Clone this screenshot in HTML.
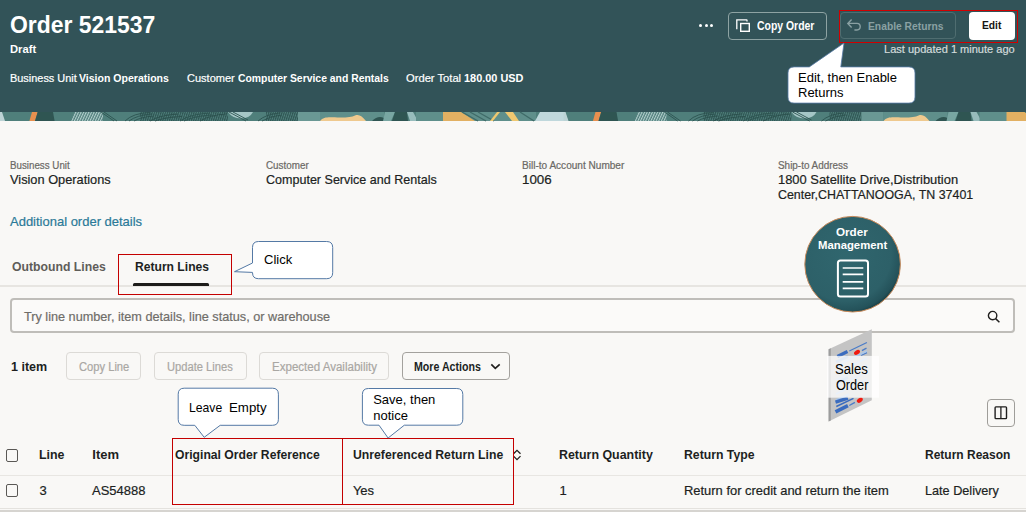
<!DOCTYPE html>
<html><head><meta charset="utf-8"><title>Order 521537</title>
<style>
html,body{margin:0;padding:0;}
body{width:1026px;height:512px;overflow:hidden;position:relative;background:#f9f8f6;font-family:"Liberation Sans",sans-serif;}
.t{position:absolute;white-space:pre;line-height:1;transform-origin:0 0;}
.r{-webkit-text-stroke:0.2px currentColor;}
.a{position:absolute;box-sizing:border-box;}
svg{position:absolute;overflow:visible;}
</style></head><body>
<div class="a" style="left:0;top:0;width:1026px;height:112px;background:#325358"></div>
<svg style="left:0;top:112px" width="1026" height="9" viewBox="0 0 1026 9">
  <defs>
    <pattern id="fp" width="2.2" height="9" patternUnits="userSpaceOnUse" patternTransform="skewX(-18)">
      <rect x="0" y="0" width="1.2" height="9" fill="#2a4f4c" fill-opacity="0.85"/>
    </pattern>
    <pattern id="fpl" width="2.6" height="9" patternUnits="userSpaceOnUse" patternTransform="skewX(-25)">
      <rect x="0" y="0" width="1.2" height="9" fill="#c6dcdc" fill-opacity="0.85"/>
    </pattern>
    <g id="pp">
      <polygon points="0,0 2,0 5,9 0,9" fill="#bcd3d5"/>
      <polygon points="32,0 37.7,0 35,9 29.4,9" fill="#e8904f"/>
      <polygon points="37.7,0 53,0 54.6,9 35,9" fill="#2f5552"/>
      <polygon points="74.6,0 103,0 103,9 71,9" fill="url(#fpl)"/>
      <path d="M101,0 L114,9 M104,0 L117,9" stroke="#2c5350" stroke-width="0.9"/>
      <path d="M125,9 Q133,1 150,0.5 M129,9 Q137,3 152,2 M134,9 Q141,5 154,4" fill="none" stroke="#2c5350" stroke-width="0.9"/>
      <rect x="140" y="0" width="88" height="9" fill="url(#fp)"/>
      <path d="M150,9 Q160,3 178,2 M155,9 Q166,5 182,4.5 M200,9 Q210,3 226,2" fill="none" stroke="#2a4f4c" stroke-width="0.9"/>
      <path d="M180,9 Q190,2 210,1 M184,9 Q194,4 212,3" fill="none" stroke="#2c5350" stroke-width="0.9"/>
      <path d="M228,0 H253 Q250,6 241,6.5 Q232,6 228,0 Z" fill="#a5c6c6"/>
      <path d="M229,0 L246,9 M233,0 L248,8" stroke="#2c5350" stroke-width="0.9"/>
      <path d="M258,9 Q266,2 280,1 M262,9 Q270,4 282,3" fill="none" stroke="#2c5350" stroke-width="0.9"/>
      <rect x="266" y="0" width="32" height="9" fill="url(#fp)"/>
      <rect x="298" y="0" width="22" height="9" fill="#6a9894"/>
      <rect x="320" y="0" width="64" height="9" fill="#5f8f8b"/>
      <path d="M320,9 C324,4 330,5.5 340,5.5 C348,5.5 352,5 355,3.5 C359,2 362,4 366,9 Z" fill="#efc98e"/>
      <path d="M372,9 Q380,1 388,9 Z" fill="#2f5552"/>
      <polygon points="385,0 395,0 391,9 383,9" fill="#78a6a2"/>
      <polygon points="395,0 407,0 408,9 392,9" fill="#2f5552"/>
      <polygon points="407,0 413,0 418,9 410,9" fill="#97bcbc"/>
      <rect x="416" y="0" width="120" height="9" fill="#5f8f8b"/>
      <polygon points="443,0 461,0 475,9 443,9" fill="#e2b062"/>
      <path d="M462,0 L478,9 M470,0 L486,9 M478,0 L494,9 M520,0 L534,9" stroke="#3f6b68" stroke-width="1.4"/>
      <polygon points="497,0 500,0 493,9 490,9" fill="#eec870"/>
      <polygon points="505,0 513,0 519,9 512,9" fill="#f0c870"/>
      <polygon points="540,0 565,0 568,9 535,9" fill="#c0d8dc"/>
    </g>
  </defs>
  <rect x="0" y="0" width="1026" height="9" fill="#4f7f7b"/>
  <use href="#pp" x="0"/>
  <use href="#pp" x="563.5"/>
</svg>
<!-- dots -->
<div class="a" style="left:699.1px;top:23.8px;width:3.2px;height:3.2px;border-radius:50%;background:#fff"></div>
<div class="a" style="left:704.5px;top:23.8px;width:3.2px;height:3.2px;border-radius:50%;background:#fff"></div>
<div class="a" style="left:709.9px;top:23.8px;width:3.2px;height:3.2px;border-radius:50%;background:#fff"></div>
<!-- copy order button -->
<div class="a" style="left:728px;top:11.6px;width:99px;height:28.2px;border:1px solid #8ea3a3;border-radius:4px"></div>
<svg style="left:736px;top:19px" width="14" height="13" viewBox="0 0 14 13">
  <path d="M0.8,10.2 V0.8 H10.6 Q11,0.8 11,1.4 V2.6" fill="none" stroke="#fff" stroke-width="1.3"/>
  <rect x="4.7" y="4.5" width="8.6" height="7.8" fill="none" stroke="#fff" stroke-width="1.4"/>
</svg>
<!-- enable returns button -->
<div class="a" style="left:840.2px;top:12px;width:116.3px;height:27.4px;border:1px solid #4f6d70;border-radius:4px"></div>
<svg style="left:847px;top:20px" width="14" height="11" viewBox="0 0 14 11">
  <path d="M4.6,-0.6 L0.8,3.4 L4.6,7.4 M0.8,3.4 H10 C11.8,3.4 13.2,4.8 13.2,6.6 C13.2,8.5 11.8,10 10,10 H7.4" fill="none" stroke="#8aa1a3" stroke-width="1.4"/>
</svg>
<!-- edit button -->
<div class="a" style="left:969px;top:12px;width:46.2px;height:27.8px;background:#fff;border-radius:4px"></div>
<!-- red rect header -->
<div class="a" style="left:838.9px;top:9.8px;width:179.3px;height:33.3px;border:1.4px solid #d20000"></div>
<!-- callout 1 -->
<svg style="left:0;top:0" width="1026" height="512">
  <path d="M794,66.9 H809.3 L844,43 L840.8,66.9 H909 Q915,66.9 915,72.9 V97.1 Q915,103.1 909,103.1 H794 Q788,103.1 788,97.1 V72.9 Q788,66.9 794,66.9 Z" fill="#fff" stroke="#5479a5" stroke-width="0.8"/>
</svg>
<!-- body details -->
<div class="a" style="left:0;top:284.8px;width:1026px;height:1.8px;background:#e7e5e1"></div>
<div class="a" style="left:132.7px;top:283.2px;width:76.8px;height:2.6px;background:#1d1c1a;border-radius:1.5px 1.5px 0 0"></div>
<div class="a" style="left:118px;top:254.2px;width:114px;height:40.4px;border:1.5px solid #c40000"></div>
<svg style="left:0;top:0" width="1026" height="512">
  <path d="M258.5,241.5 H326.7 Q332.7,241.5 332.7,247.5 V272.7 Q332.7,278.7 326.7,278.7 H258.5 Q252.5,278.7 252.5,272.7 V272.4 L234.5,271.7 L252.5,263 V247.5 Q252.5,241.5 258.5,241.5 Z" fill="#fff" stroke="#5479a5" stroke-width="1"/>
</svg>
<!-- search -->
<div class="a" style="left:10.3px;top:298.2px;width:1004.8px;height:35.2px;border:2px solid #bfbdb9;border-radius:4px;background:#fbfaf9"></div>
<svg style="left:987px;top:310px" width="14" height="13" viewBox="0 0 14 13">
  <circle cx="5.6" cy="5.6" r="4.2" fill="none" stroke="#201f1e" stroke-width="1.4"/>
  <path d="M8.6,8.6 L12.4,12.2" stroke="#201f1e" stroke-width="1.5"/>
</svg>
<!-- buttons -->
<div class="a" style="left:66px;top:352px;width:75.4px;height:27.5px;border:1.2px solid #dcdad6;border-radius:4px"></div>
<div class="a" style="left:154px;top:352px;width:92.7px;height:27.5px;border:1.2px solid #dcdad6;border-radius:4px"></div>
<div class="a" style="left:258.5px;top:352px;width:130.4px;height:27.5px;border:1.2px solid #dcdad6;border-radius:4px"></div>
<div class="a" style="left:401.5px;top:352px;width:108.1px;height:27.5px;border:1.3px solid #a3a19d;border-radius:4px"></div>
<svg style="left:491px;top:363px" width="10" height="7" viewBox="0 0 10 7">
  <path d="M0.3,1.4 L4.3,5.4 L8.7,1.4" fill="none" stroke="#201f1e" stroke-width="1.7"/>
</svg>
<!-- circle -->
<svg style="left:0;top:0" width="1026" height="512">
  <defs>
    <radialGradient id="cg" cx="0.42" cy="0.4" r="0.62">
      <stop offset="0" stop-color="#30666e"/>
      <stop offset="0.78" stop-color="#2d6068"/>
      <stop offset="0.95" stop-color="#24525a"/>
      <stop offset="1" stop-color="#1c4248"/>
    </radialGradient>
  </defs>
  <circle cx="852.6" cy="264.2" r="47.8" fill="url(#cg)" stroke="#c98a5a" stroke-width="1"/>
  <rect x="837.9" y="260.4" width="30.1" height="36.2" rx="2.5" fill="none" stroke="#fff" stroke-width="2"/>
  <path d="M842.7,268 H863.3 M842.7,274.4 H863.3 M842.7,281.9 H863.3 M842.7,288.4 H863.3" stroke="#fff" stroke-width="1.6"/>
</svg>
<!-- sales order doc -->
<svg style="left:0;top:0" width="1026" height="512">
  <polygon points="828.6,349.2 871.8,329.2 871.8,400.3 828.6,421.6" fill="#c4c4c4"/>
  <polygon points="828.6,349.2 830.8,348.2 830.8,420.5 828.6,421.6" fill="#9c9c9c"/>
  <g stroke-linecap="butt" fill="none">
    <path d="M849.3,351 L866.9,342.5 M861.9,350.6 L866.5,348.1 M861,355.5 L867,352.6" stroke="#4a7cc8" stroke-width="1.3"/>
    <path d="M837.4,356.5 L847.5,351.5" stroke="#3a6cbf" stroke-width="3.2"/>
    <path d="M836,366 L867,351 M836,373 L867,358 M836,380 L867,365 M836,387 L867,372 M836,394 L867,379 M836,400 L849,394" stroke="#a9c6ea" stroke-width="1.8"/>
    <path d="M836,362 L848,356.5 M836,383 L848,377.5" stroke="#8fb2e0" stroke-width="3"/>
    <path d="M835.5,402.2 L847.9,398.2" stroke="#3a6cbf" stroke-width="3.4"/>
    <path d="M836.3,406.5 L853.5,398.4" stroke="#3a6cbf" stroke-width="1.5"/>
    <path d="M835.5,411.8 L847.9,405.6" stroke="#3a6cbf" stroke-width="3.6"/>
    <path d="M849.3,405.5 L854.9,402.3" stroke="#4a7cc8" stroke-width="1.4"/>
  </g>
  <ellipse cx="857" cy="352.4" rx="3.3" ry="2.1" transform="rotate(-35 857 352.4)" fill="#f01a10"/>
  <ellipse cx="859.8" cy="400.2" rx="3.3" ry="2.1" transform="rotate(-35 859.8 400.2)" fill="#f01a10"/>
  <rect x="826.9" y="355.9" width="52.1" height="41.8" fill="#ffffff" fill-opacity="0.74"/>
</svg>
<!-- column toggle -->
<div class="a" style="left:987px;top:399.2px;width:27.8px;height:27.8px;border:1.2px solid #9f9d99;border-radius:4px"></div>
<svg style="left:994px;top:406px" width="14" height="14" viewBox="0 0 14 14">
  <rect x="1.1" y="0.9" width="11.4" height="11.7" rx="0.8" fill="none" stroke="#201f1e" stroke-width="1.4"/>
  <path d="M6.9,0.9 V12.6" stroke="#201f1e" stroke-width="1.3"/>
</svg>
<!-- table -->
<div class="a" style="left:5.5px;top:449px;width:12.8px;height:12.9px;border:1.6px solid #5a5855;border-radius:2px"></div>
<div class="a" style="left:5.5px;top:484.2px;width:12.8px;height:12.9px;border:1.6px solid #5a5855;border-radius:2px"></div>
<div class="a" style="left:0;top:474.5px;width:1026px;height:1.6px;background:#e8e6e2"></div>
<div class="a" style="left:0;top:507.6px;width:1026px;height:1.8px;background:#e4e2de"></div>
<div class="a" style="left:0;top:509.6px;width:1026px;height:3px;background:#d6d4d0"></div>
<svg style="left:513px;top:449px" width="9" height="13" viewBox="0 0 9 13">
  <path d="M0.5,4.8 L4,1.3 L7.5,4.8 M0.5,7.1 L4,10.6 L7.5,7.1" fill="none" stroke="#201f1e" stroke-width="1.3"/>
</svg>
<div class="a" style="left:172px;top:438px;width:171px;height:67px;border:1.5px solid #c40000"></div>
<div class="a" style="left:342px;top:438.3px;width:171.8px;height:66.5px;border:1.5px solid #c40000"></div>
<svg style="left:0;top:0" width="1026" height="512">
  <path d="M184.2,388.2 H272.4 Q278.4,388.2 278.4,394.2 V419.3 Q278.4,425.3 272.4,425.3 H220.2 L204.2,437.3 L194.8,425.3 H184.2 Q178.2,425.3 178.2,419.3 V394.2 Q178.2,388.2 184.2,388.2 Z" fill="#fff" stroke="#5479a5" stroke-width="1"/>
  <path d="M368.4,388.5 H456.8 Q462.8,388.5 462.8,394.5 V419.2 Q462.8,425.2 456.8,425.2 H404.3 L388.1,438 L379,425.2 H368.4 Q362.4,425.2 362.4,419.2 V394.5 Q362.4,388.5 368.4,388.5 Z" fill="#fff" stroke="#5479a5" stroke-width="1"/>
</svg>
<div id="t0" class="t" style="left:10.0px;top:14.13px;font-size:23px;font-weight:700;color:#ffffff;transform:scaleX(0.9967);">Order 521537</div>
<div id="t1" class="t" style="left:10.2px;top:43.81px;font-size:10.5px;font-weight:700;color:#ffffff;transform:scaleX(1.0687);">Draft</div>
<div id="t2" class="t r" style="left:10.0px;top:72.67px;font-size:11.5px;font-weight:400;color:#ffffff;transform:scaleX(0.9500);">Business Unit</div>
<div id="t3" class="t" style="left:79.0px;top:72.67px;font-size:11.5px;font-weight:700;color:#ffffff;transform:scaleX(0.9154);">Vision Operations</div>
<div id="t4" class="t r" style="left:186.9px;top:72.67px;font-size:11.5px;font-weight:400;color:#ffffff;transform:scaleX(0.9587);">Customer</div>
<div id="t5" class="t" style="left:237.7px;top:72.67px;font-size:11.5px;font-weight:700;color:#ffffff;transform:scaleX(0.9034);">Computer Service and Rentals</div>
<div id="t6" class="t r" style="left:406.4px;top:72.67px;font-size:11.5px;font-weight:400;color:#ffffff;transform:scaleX(0.9720);">Order Total</div>
<div id="t7" class="t" style="left:464.3px;top:72.67px;font-size:11.5px;font-weight:700;color:#ffffff;transform:scaleX(0.9496);">180.00 USD</div>
<div id="t8" class="t" style="left:756.5px;top:19.74px;font-size:12px;font-weight:700;color:#ffffff;transform:scaleX(0.8695);">Copy Order</div>
<div id="t9" class="t" style="left:868.0px;top:20.57px;font-size:11.5px;font-weight:700;color:#8aa1a3;transform:scaleX(0.8950);">Enable Returns</div>
<div id="t10" class="t" style="left:982.2px;top:20.36px;font-size:10.8px;font-weight:700;color:#161513;transform:scaleX(0.9507);">Edit</div>
<div id="t11" class="t r" style="left:884.4px;top:43.69px;font-size:11px;font-weight:400;color:#d3dbdb;transform:scaleX(1.0033);">Last updated 1 minute ago</div>
<div id="t12" class="t" style="left:798.0px;top:70.60px;font-size:13px;font-weight:400;color:#000;transform:scaleX(0.9997);">Edit, then Enable</div>
<div id="t13" class="t" style="left:798.0px;top:86.30px;font-size:13px;font-weight:400;color:#000;">Returns</div>
<div id="t14" class="t r" style="left:10.2px;top:160.53px;font-size:10px;font-weight:400;color:#6b6965;transform:scaleX(0.9764);">Business Unit</div>
<div id="t15" class="t r" style="left:10.2px;top:172.60px;font-size:13px;font-weight:400;color:#201f1e;transform:scaleX(0.9836);">Vision Operations</div>
<div id="t16" class="t r" style="left:265.8px;top:160.53px;font-size:10px;font-weight:400;color:#6b6965;transform:scaleX(0.9848);">Customer</div>
<div id="t17" class="t r" style="left:265.8px;top:172.60px;font-size:13px;font-weight:400;color:#201f1e;transform:scaleX(0.9642);">Computer Service and Rentals</div>
<div id="t18" class="t r" style="left:522.2px;top:160.53px;font-size:10px;font-weight:400;color:#6b6965;transform:scaleX(1.0057);">Bill-to Account Number</div>
<div id="t19" class="t r" style="left:522.2px;top:172.60px;font-size:13px;font-weight:400;color:#201f1e;transform:scaleX(1.0269);">1006</div>
<div id="t20" class="t r" style="left:778.0px;top:160.53px;font-size:10px;font-weight:400;color:#6b6965;transform:scaleX(0.9914);">Ship-to Address</div>
<div id="t21" class="t r" style="left:778.0px;top:172.90px;font-size:13px;font-weight:400;color:#201f1e;transform:scaleX(0.9930);">1800 Satellite Drive,Distribution</div>
<div id="t22" class="t r" style="left:778.0px;top:188.40px;font-size:13px;font-weight:400;color:#201f1e;transform:scaleX(0.9547);">Center,CHATTANOOGA, TN 37401</div>
<div id="t23" class="t r" style="left:10.2px;top:215.20px;font-size:13px;font-weight:400;color:#2b7a98;transform:scaleX(0.9989);">Additional order details</div>
<div id="t24" class="t" style="left:12.1px;top:259.90px;font-size:13px;font-weight:700;color:#5f5d59;transform:scaleX(0.9412);">Outbound Lines</div>
<div id="t25" class="t" style="left:134.5px;top:259.90px;font-size:13px;font-weight:700;color:#201f1e;transform:scaleX(0.9312);">Return Lines</div>
<div id="t26" class="t" style="left:264.0px;top:253.20px;font-size:13px;font-weight:400;color:#000;">Click</div>
<div id="t27" class="t r" style="left:23.9px;top:309.90px;font-size:13px;font-weight:400;color:#6f6d69;transform:scaleX(0.9751);">Try line number, item details, line status, or warehouse</div>
<div id="t28" class="t" style="left:10.6px;top:360.00px;font-size:13px;font-weight:700;color:#201f1e;transform:scaleX(0.9633);">1 item</div>
<div id="t29" class="t r" style="left:78.5px;top:361.24px;font-size:12px;font-weight:400;color:#a9a7a3;transform:scaleX(0.9307);">Copy Line</div>
<div id="t30" class="t r" style="left:167.3px;top:361.24px;font-size:12px;font-weight:400;color:#a9a7a3;transform:scaleX(0.9304);">Update Lines</div>
<div id="t31" class="t r" style="left:271.5px;top:361.24px;font-size:12px;font-weight:400;color:#a9a7a3;transform:scaleX(0.9616);">Expected Availability</div>
<div id="t32" class="t" style="left:414.3px;top:361.24px;font-size:12px;font-weight:700;color:#201f1e;transform:scaleX(0.8854);">More Actions</div>
<div id="t33" class="t" style="left:836.0px;top:226.89px;font-size:11px;font-weight:700;color:#ffffff;transform:scaleX(1.0611);">Order</div>
<div id="t34" class="t" style="left:817.9px;top:239.69px;font-size:11px;font-weight:700;color:#ffffff;transform:scaleX(1.0290);">Management</div>
<div id="t35" class="t" style="left:834.8px;top:361.85px;font-size:14px;font-weight:400;color:#000;transform:scaleX(0.9392);">Sales</div>
<div id="t36" class="t" style="left:835.9px;top:378.05px;font-size:14px;font-weight:400;color:#000;transform:scaleX(0.9051);">Order</div>
<div id="t37" class="t" style="left:188.8px;top:401.00px;font-size:13px;font-weight:400;color:#000;transform:scaleX(0.9373);">Leave</div>
<div id="t38" class="t" style="left:229.4px;top:401.00px;font-size:13px;font-weight:400;color:#000;transform:scaleX(1.0205);">Empty</div>
<div id="t39" class="t" style="left:373.2px;top:392.60px;font-size:13px;font-weight:400;color:#000;">Save, then</div>
<div id="t40" class="t" style="left:373.2px;top:408.70px;font-size:13px;font-weight:400;color:#000;">notice</div>
<div id="t41" class="t" style="left:39.1px;top:448.00px;font-size:13px;font-weight:700;color:#201f1e;transform:scaleX(0.9538);">Line</div>
<div id="t42" class="t" style="left:92.3px;top:448.00px;font-size:13px;font-weight:700;color:#201f1e;">Item</div>
<div id="t43" class="t" style="left:174.7px;top:448.00px;font-size:13px;font-weight:700;color:#201f1e;transform:scaleX(0.9358);">Original Order Reference</div>
<div id="t44" class="t" style="left:352.9px;top:448.00px;font-size:13px;font-weight:700;color:#201f1e;transform:scaleX(0.9408);">Unreferenced Return Line</div>
<div id="t45" class="t" style="left:559.4px;top:448.00px;font-size:13px;font-weight:700;color:#201f1e;transform:scaleX(0.9549);">Return Quantity</div>
<div id="t46" class="t" style="left:684.0px;top:448.00px;font-size:13px;font-weight:700;color:#201f1e;transform:scaleX(0.9414);">Return Type</div>
<div id="t47" class="t" style="left:925.1px;top:448.00px;font-size:13px;font-weight:700;color:#201f1e;transform:scaleX(0.9236);">Return Reason</div>
<div id="t48" class="t r" style="left:39.5px;top:483.60px;font-size:13px;font-weight:400;color:#201f1e;">3</div>
<div id="t49" class="t r" style="left:92.3px;top:483.60px;font-size:13px;font-weight:400;color:#201f1e;transform:scaleX(0.9981);">AS54888</div>
<div id="t50" class="t r" style="left:352.9px;top:483.60px;font-size:13px;font-weight:400;color:#201f1e;">Yes</div>
<div id="t51" class="t r" style="left:559.5px;top:483.60px;font-size:13px;font-weight:400;color:#201f1e;">1</div>
<div id="t52" class="t r" style="left:684.0px;top:483.60px;font-size:13px;font-weight:400;color:#201f1e;transform:scaleX(0.9940);">Return for credit and return the item</div>
<div id="t53" class="t r" style="left:925.1px;top:483.60px;font-size:13px;font-weight:400;color:#201f1e;transform:scaleX(0.9740);">Late Delivery</div>
</body></html>
